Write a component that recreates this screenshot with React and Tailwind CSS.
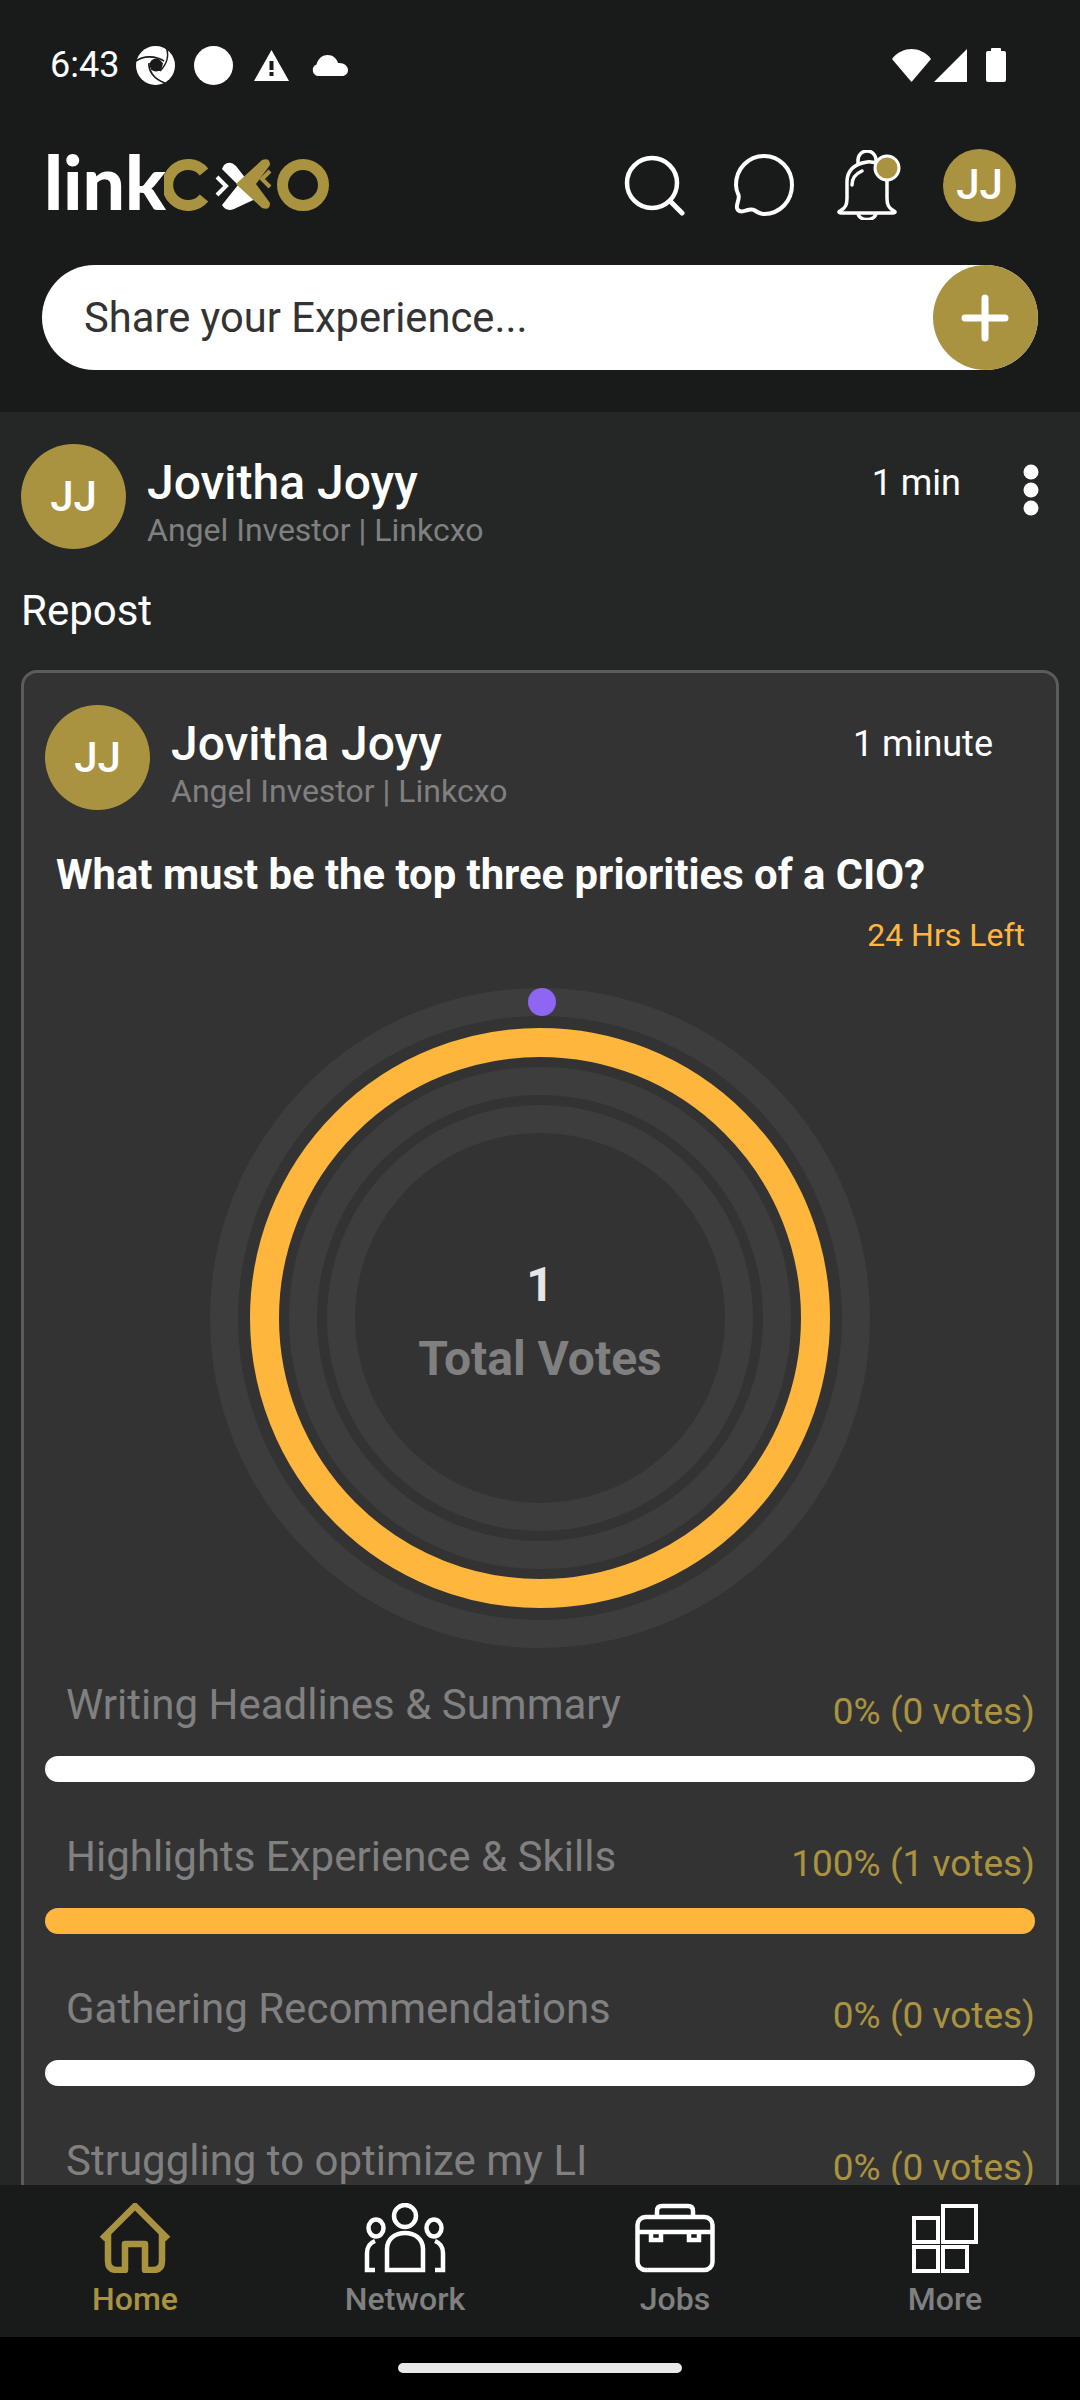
const GOLD = "#aa9340";

function Shutter() {
  return (
    <svg width="39" height="39" viewBox="0 0 39 39">
      <circle cx="19.5" cy="19.5" r="19.5" fill="#fff" />
      <path d="M0 15 C8 9 20 10 28 15 M13 17 C12 25 18 33 29 37 M30 1 C33 8 32 17 24 25" stroke="#191b1a" strokeWidth="1.6" fill="none" />
      <circle cx="20" cy="19" r="6.5" fill="#191b1a" />
      <path d="M20 12.5 L27 17 L24 25 L15 24 Z" fill="#191b1a" />
    </svg>
  );
}

function StatusBar() {
  return (
    <div className="h-[130px] flex items-center pl-[50px] text-white">
      <span className="text-[36px] leading-none w-[86px]">6:43</span>
      <Shutter />
      <div className="ml-[19px] w-[39px] h-[39px] rounded-full bg-white" />
      <svg className="ml-[21px]" width="35" height="31" viewBox="0 0 35 31">
        <path d="M17.5 0 L35 31 H0 Z" fill="#fff" />
        <rect x="15.5" y="11" width="4" height="9" fill="#191b1a" />
        <rect x="15.5" y="22" width="4" height="4" fill="#191b1a" />
      </svg>
      <svg className="ml-[23px]" width="36" height="21" viewBox="0 0 36 21">
        <path d="M6 21 A6 6 0 0 1 4.5 9.5 C6 3 11 0 15.500 0 C21 0 24.500 3.500 26 8 C32 7.500 36 11 36 15 C36 18.500 33.500 21 30 21 Z" fill="#fff" />
      </svg>
      <div className="flex-1" />
      <svg width="39" height="33" viewBox="0 0 39 33">
        <path d="M0 10 C5 3 13 0 19.500 0 C26 0 34 3 39 10 L19.500 33 Z" fill="#fff" />
      </svg>
      <svg className="ml-[3px]" width="33" height="33" viewBox="0 0 33 33">
        <path d="M33 0 V33 H0 Z" fill="#fff" />
      </svg>
      <svg className="ml-[19px] mr-[74px]" width="20" height="34" viewBox="0 0 20 34">
        <path d="M5 3 V1 Q5 0 6 0 H14 Q15 0 15 1 V3 H18 Q20 3 20 5 V32 Q20 34 18 34 H2 Q0 34 0 32 V5 Q0 3 2 3 Z" fill="#fff" />
      </svg>
    </div>
  );
}

function Logo() {
  return (
    <div className="flex items-center w-[285px] h-[60px]">
      <span
        className="text-white font-black text-[75px] leading-none w-[120px] -mt-[8px]"
        style={{ fontFamily: 'Lato, sans-serif' }}
      >
        link
      </span>
      <svg width="165" height="60" viewBox="0 0 165 60">
        <path d="M40 17 A20.500 20.500 0 1 0 40 43" fill="none" stroke={GOLD} strokeWidth="11" />
        <circle cx="139" cy="30" r="20.500" fill="none" stroke={GOLD} strokeWidth="11" />
        <path d="M60 10 Q66 5 72 11 L96 42 L70 54 Q62 57 58 50 L74 30 L58 14 Z" fill="#fff" />
        <path d="M53 22 L62 31 L53 40" fill="none" stroke="#fff" strokeWidth="4" />
        <path d="M72 29 L98 5 Q106 2 106 10 L92 29 L106 48 Q106 56 98 53 Z" fill={GOLD} />
        <path d="M106 16 L98 24 L106 32" fill="none" stroke={GOLD} strokeWidth="4" />
      </svg>
    </div>
  );
}

function TopIcons() {
  return (
    <div className="flex items-center">
      <svg width="62" height="62" viewBox="0 0 62 62" className="fill-none stroke-white">
        <circle cx="28" cy="29" r="25" strokeWidth="4.500" />
        <path d="M46 47 L58 59" strokeWidth="5" strokeLinecap="round" />
      </svg>
      <svg className="ml-[47px]" width="62" height="62" viewBox="0 0 62 62" fill="none" stroke="#fff" strokeWidth="4">
        <path d="M31 2 C15 2 3 15 3 31 C3 35 4 38 5.500 41 C7 45 3 50 4 54 C5 58 9 58 13 56.500 C16 55.500 19 55 21 56 C24 58 27 60 31 60 C47 60 59 47 59 31 C59 15 47 2 31 2 Z" />
      </svg>
      <svg className="ml-[41px]" width="66" height="70" viewBox="0 0 66 70" fill="none" stroke="#fff" strokeWidth="3.500">
        <path d="M22 14 V10 A9 9 0 0 1 40 10 V14" />
        <path d="M4 61 C10 58 11 54 11 48 V32 C11 21 18 14 31 12 C40 11 48 16 51 24 V48 C51 54 52 58 58 61 C60 62 59 63 57 63 H5 C3 63 2 62 4 61 Z" />
        <path d="M22 63 A9 6.500 0 0 0 40 63" />
        <path d="M16 35 C16 29 19 24 26 21" strokeLinecap="round" />
        <circle cx="51" cy="18" r="12" fill={GOLD} stroke="#fff" strokeWidth="3" />
      </svg>
    </div>
  );
}

function Avatar({ size, text }) {
  return (
    <div
      className={`${size} shrink-0 rounded-full bg-[#aa9340] flex items-center justify-center text-white font-medium leading-none`}
    >
      {text}
    </div>
  );
}

function Header() {
  return (
    <header className="bg-[#191b1a] h-[412px] shrink-0">
      <StatusBar />
      <div className="h-[110px] flex items-center pl-[44px]">
        <Logo />
        <div className="ml-[295px]">
          <TopIcons />
        </div>
        <div className="ml-[41px]">
          <Avatar size="w-[73px] h-[73px] text-[42px]" text="JJ" />
        </div>
      </div>
      <div className="mt-[25px] mx-[42px] h-[105px] bg-white rounded-full flex items-center justify-between pl-[42px]">
        <span className="text-[41.700px] text-[#333] mt-[2px]">Share your Experience...</span>
        <div className="w-[105px] h-[105px] rounded-full bg-[#aa9340] flex items-center justify-center">
          <svg className="mr-[2px]" width="48" height="48" viewBox="0 0 48 48" stroke="#fff" strokeWidth="7" strokeLinecap="round">
            <path d="M4 24 H44 M24 4 V44" />
          </svg>
        </div>
      </div>
    </header>
  );
}

function PersonRow({ time, timeClass, children }) {
  return (
    <div className="flex items-start">
      <Avatar size="w-[105px] h-[105px] text-[42px]" text="JJ" />
      <div className="ml-[21px] flex-1 pt-[14px]">
        <div className="text-white text-[48px] leading-[50px] font-medium">Jovitha Joyy</div>
        <div className="text-[#808080] text-[32px] leading-[36px] mt-[4px]">Angel Investor | Linkcxo</div>
      </div>
      <div className={`text-white text-[36px] leading-[44px] pt-[17px] ${timeClass}`}>{time}</div>
      {children}
    </div>
  );
}

function Chart() {
  return (
    <div className="relative h-[660px] mt-[35px] flex flex-col items-center justify-center">
      <svg className="absolute left-1/2 -translate-x-1/2 top-0" width="660" height="660" viewBox="0 0 660 660" fill="none">
        <circle cx="330" cy="330" r="316" stroke="#3d3d3d" strokeWidth="28" />
        <circle cx="330" cy="330" r="275.500" stroke="#ffb63c" strokeWidth="29" />
        <circle cx="330" cy="330" r="237" stroke="#3d3d3d" strokeWidth="28" />
        <circle cx="330" cy="330" r="199" stroke="#3d3d3d" strokeWidth="28" />
        <circle cx="332" cy="14" r="14" fill="#8f66f1" />
      </svg>
      <div className="relative text-center font-bold text-[48px] leading-[56px] mt-[9px]">
        <div className="text-[#e6e6e6] -mt-[2px]">1</div>
        <div className="text-[#808080] mt-[18px]">Total Votes</div>
      </div>
    </div>
  );
}

function PollRow({ label, value, fill }) {
  return (
    <div className="h-[152px]">
      <div className="flex justify-between items-start h-[76px]">
        <span className="ml-[21px] text-[#808080] text-[42px] leading-[50px]">{label}</span>
        <span className="text-[#aa9340] text-[37px] leading-[44px] mt-[10px]">{value}</span>
      </div>
      <div className={`h-[26px] rounded-full ${fill}`} />
    </div>
  );
}

function Card() {
  return (
    <div className="mt-[34px] border-[3px] border-[#5c5c5c] rounded-[16px] bg-[#333333] pt-[32px] px-[21px]">
      <PersonRow time="1 minute" timeClass="mr-[42px]" />
      <div className="ml-[11px] mt-[41px] text-white font-bold text-[41.800px] leading-[48px]">
        What must be the top three priorities of a CIO?
      </div>
      <div className="text-right text-[#ffb63c] text-[32px] leading-[36px] mt-[18px] mr-[10px]">24 Hrs Left</div>
      <div className="-mx-[21px]">
        <Chart />
      </div>
      <div className="mt-[32px]">
        <PollRow label="Writing Headlines & Summary" value="0% (0 votes)" fill="bg-white" />
        <PollRow label="Highlights Experience & Skills" value="100% (1 votes)" fill="bg-[#ffb63c]" />
        <PollRow label="Gathering Recommendations" value="0% (0 votes)" fill="bg-white" />
        <PollRow label="Struggling to optimize my LI" value="0% (0 votes)" fill="bg-white" />
      </div>
    </div>
  );
}

function NavItem({ label, active, children }) {
  return (
    <div className="flex flex-col items-center pt-[18px]">
      <div className="h-[70px] flex items-center justify-center">{children}</div>
      <span className={`mt-[8px] text-[32px] leading-[36px] font-medium ${active ? "text-[#aa9340]" : "text-[#808080]"}`}>
        {label}
      </span>
    </div>
  );
}

function BottomNav() {
  return (
    <nav className="h-[152px] shrink-0 bg-[#191b1a] grid grid-cols-4 px-0">
      <NavItem label="Home" active>
        <svg width="72" height="70" viewBox="0 0 72 70" fill="none" stroke="#aa9340" strokeWidth="6.500" strokeLinejoin="round">
          <path d="M3 36 L36 3 L69 36" />
          <path d="M9 31 V58 Q9 67 18 67 H26 V41 H46 V67 H54 Q63 67 63 58 V31" />
        </svg>
      </NavItem>
      <NavItem label="Network">
        <svg width="82" height="70" viewBox="0 0 82 70" fill="none" stroke="#fff" strokeWidth="4.500">
          <ellipse cx="41" cy="13" rx="11" ry="11" />
          <ellipse cx="12" cy="25" rx="7.500" ry="8.500" />
          <ellipse cx="70" cy="25" rx="7.500" ry="8.500" />
          <path d="M23 67 V46 C23 36 31 30 41 30 C51 30 59 36 59 46 V67 Z" />
          <path d="M11 38 C6 40 3 44 3 50 V67 H11" />
          <path d="M71 38 C76 40 79 44 79 50 V67 H71" />
        </svg>
      </NavItem>
      <NavItem label="Jobs">
        <svg width="80" height="70" viewBox="0 0 80 70" fill="none" stroke="#fff" strokeWidth="4.500">
          <path d="M22 14 V8 Q22 3 27 3 H53 Q58 3 58 8 V14" />
          <rect x="2.500" y="14" width="75" height="53" rx="8" />
          <path d="M2.500 29 H77.500" />
          <path d="M16 29 V37 H26 V29 M54 29 V37 H64 V29" />
        </svg>
      </NavItem>
      <NavItem label="More">
        <svg width="68" height="70" viewBox="0 0 68 70" fill="none" stroke="#fff" strokeWidth="4">
          <rect x="32" y="3" width="33" height="36" />
          <rect x="3" y="15" width="24" height="24" />
          <rect x="3" y="44" width="24" height="24" />
          <rect x="32" y="44" width="24" height="24" />
        </svg>
      </NavItem>
    </nav>
  );
}

export default function App() {
  return (
    <div
      className="w-[1080px] h-[2400px] flex flex-col overflow-hidden bg-black"
      style={{ fontFamily: 'Roboto, "Noto Sans", sans-serif' }}
    >
      <Header />
      <main className="flex-1 min-h-0 overflow-hidden bg-[#252727] pt-[32px] px-[21px]">
        <PersonRow time="1 min" timeClass="mr-[62px]">
          <svg className="mr-[20px] mt-[20px]" width="16" height="52" viewBox="0 0 16 52" fill="#fff">
            <circle cx="8" cy="8" r="7.500" />
            <circle cx="8" cy="26" r="7.500" />
            <circle cx="8" cy="44" r="7.500" />
          </svg>
        </PersonRow>
        <div className="mt-[37px] text-white text-[42px] leading-[50px]">Repost</div>
        <Card />
      </main>
      <BottomNav />
      <div className="h-[63px] shrink-0 bg-black flex justify-center pt-[26px]">
        <div className="w-[284px] h-[10px] rounded-full bg-[#e8e8e8]" />
      </div>
    </div>
  );
}
